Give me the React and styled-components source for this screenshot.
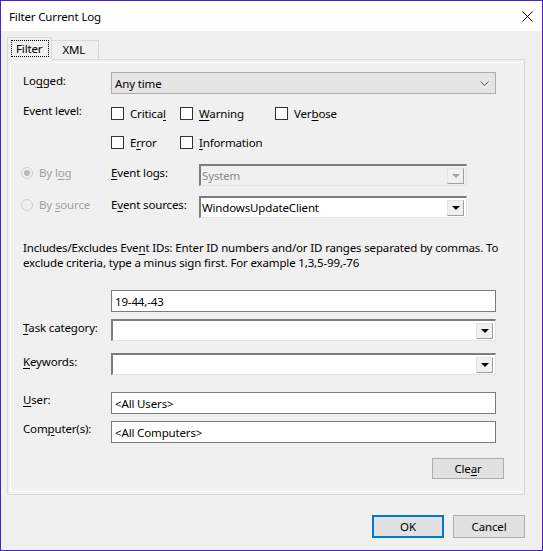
import React from "react";
import styled, { createGlobalStyle } from "styled-components";

const GlobalStyle = createGlobalStyle`
    html, body {
        margin: 0;
        padding: 0;
        background: #f0f0f0;
    }
    * {
        box-sizing: border-box;
    }
`;

const Window = styled.div`
    width: 543px;
    height: 551px;
    border: 1px solid #4b20c9;
    background: #f0f0f0;
    display: flex;
    flex-direction: column;
    font-family: "Noto Sans", "Open Sans", sans-serif;
    font-size: 11.5px;
    letter-spacing: -0.15px;
    color: #000;
    overflow: hidden;
`;

const TitleBar = styled.div`
    height: 30px;
    flex: 0 0 auto;
    background: #fff;
    display: flex;
    align-items: center;
    justify-content: space-between;
    padding: 0 9px 0 8px;
`;

const Body = styled.div`
    flex: 1;
    display: flex;
    flex-direction: column;
    padding: 7px 17px 0 6px;
`;

const TabStrip = styled.div`
    display: flex;
    align-items: flex-end;
    height: 22px;
    position: relative;
    z-index: 1;
    margin-bottom: -1px;
`;

const Tab = styled.div`
    height: ${(p) => (p.active ? "23px" : "20px")};
    padding: ${(p) => (p.active ? "2px 2px 3px 3px" : "0 13px 1px 10px")};
    border: 1px solid #d9d9d9;
    border-bottom: ${(p) => (p.active ? "none" : "1px solid #d9d9d9")};
    border-left: ${(p) => (p.active ? "1px solid #d9d9d9" : "none")};
    background: #f0f0f0;
    display: flex;
    align-items: center;
`;

const FocusRect = styled.span`
    border: 1px dotted #000;
    padding: 0 6px 0 4px;
    height: 17px;
    display: flex;
    align-items: center;
`;

const Panel = styled.div`
    border: 1px solid #d9d9d9;
    padding: 2px;
    background: #f0f0f0;
`;

const PanelInner = styled.div`
    border: 1px solid #fff;
    border-right-color: #f7f7f7;
    padding: 9px 16px 12px 0;
    display: flex;
    flex-direction: column;
`;

const Row = styled.div`
    display: flex;
    align-items: center;
    height: ${(p) => p.h || 22}px;
    margin-top: ${(p) => p.mt || 0}px;
    padding-left: ${(p) => (p.radio ? 10 : 12)}px;
`;

const Label = styled.div`
    width: 88px;
    flex: 0 0 auto;
    align-self: flex-start;
    line-height: ${(p) => p.lh || 18}px;
`;

const SubLabel = styled.div`
    width: 88px;
    flex: 0 0 auto;
    align-self: flex-start;
    line-height: 18px;
`;

const Select = styled.div`
    flex: 1;
    margin-right: 9px;
    height: 22px;
    background: #e5e5e5;
    border: 1px solid #adadad;
    display: flex;
    align-items: center;
    justify-content: space-between;
    padding: 0 6px 0 3px;
`;

const Combo = styled.div`
    flex: ${(p) => (p.full ? 1 : "0 0 auto")};
    width: ${(p) => (p.full ? "auto" : `${p.w}px`)};
    margin-right: ${(p) => (p.full ? 9 : 0)}px;
    height: 22px;
    border-style: solid;
    border-width: 2px 1px 1px 2px;
    border-color: #7c7c7c #e3e3e3 #e3e3e3 #7c7c7c;
    display: flex;
    align-items: center;
    justify-content: space-between;
    padding: 0 2px 0 0;
    color: ${(p) => (p.disabled ? "#8a8a8a" : "#000")};
    background: ${(p) => (p.disabled ? "#f0f0f0" : "#fff")};
`;

const ComboText = styled.span`
    padding-left: 1px;
    line-height: 16px;
`;

const ComboButton = styled.div`
    width: 17px;
    height: 16px;
    background: #f0f0f0;
    border: 1px solid #e3e3e3;
    border-right-color: #a0a0a0;
    border-bottom-color: #a0a0a0;
    display: flex;
    align-items: center;
    justify-content: center;
    padding-top: 1px;
`;

const Arrow = styled.div`
    width: 0;
    height: 0;
    border-left: 4px solid transparent;
    border-right: 4px solid transparent;
    border-top: 4px solid ${(p) => (p.disabled ? "#a0a0a0" : "#000")};
`;

const TextBox = styled.div`
    flex: 1;
    margin-right: 9px;
    height: 22px;
    background: #fff;
    border: 1px solid #7a7a7a;
    display: flex;
    align-items: center;
    padding-left: 3px;
`;

const CheckItem = styled.label`
    display: flex;
    align-items: center;
    width: ${(p) => p.w}px;
    flex: 0 0 auto;
`;

const Box = styled.span`
    width: 13px;
    height: 13px;
    border: 1px solid #333;
    background: #fff;
    margin-right: 6px;
    flex: 0 0 auto;
`;

const RadioItem = styled.div`
    display: flex;
    align-items: center;
    width: 90px;
    flex: 0 0 auto;
    align-self: flex-start;
    height: 17px;
    color: #a0a0a0;
`;

const RadioCircle = styled.span`
    width: 12px;
    height: 12px;
    border-radius: 50%;
    border: 1px solid #cccccc;
    background: #f0f0f0;
    margin-right: 6px;
    display: flex;
    align-items: center;
    justify-content: center;

    &::after {
        content: "";
        width: 6px;
        height: 6px;
        border-radius: 50%;
        background: ${(p) => (p.checked ? "#b9b9b9" : "transparent")};
    }
`;

const Hint = styled.div`
    margin-top: 22px;
    padding-left: 12px;
    line-height: 15px;
    white-space: nowrap;
`;

const ClearRow = styled.div`
    display: flex;
    justify-content: flex-end;
    margin-top: 15px;
`;

const Button = styled.button`
    width: 72px;
    height: ${(p) => p.h || 23}px;
    background: #e1e1e1;
    border: ${(p) => (p.primary ? "2px solid #0078d7" : "1px solid #adadad")};
    font-family: inherit;
    font-size: inherit;
    letter-spacing: inherit;
    color: #000;
    padding: 0;
    margin: 0;
    margin-right: ${(p) => p.mr || 0}px;
`;

const Footer = styled.div`
    display: flex;
    justify-content: flex-end;
    gap: 9px;
    margin-top: 20px;
`;

const CloseIcon = () => (
    <svg width="11" height="11" viewBox="0 0 11 11">
        <path d="M0.5 0.5 L10.5 10.5 M10.5 0.5 L0.5 10.5" stroke="#000" strokeWidth="1" fill="none" />
    </svg>
);

const Chevron = () => (
    <svg width="9" height="5" viewBox="0 0 9 5">
        <path d="M0.5 0.5 L4.5 4.5 L8.5 0.5" stroke="#555" strokeWidth="1" fill="none" />
    </svg>
);

const Key = styled.u`
    text-decoration-thickness: 1px;
    text-underline-offset: 2px;
`;

export default function App() {
    return (
        <>
            <GlobalStyle />
            <Window>
                <TitleBar>
                    <span>Filter Current Log</span>
                    <CloseIcon />
                </TitleBar>
                <Body>
                    <TabStrip>
                        <Tab active>
                            <FocusRect>Filter</FocusRect>
                        </Tab>
                        <Tab>XML</Tab>
                    </TabStrip>
                    <Panel>
                        <PanelInner>
                            <Row>
                                <Label>
                                    Lo<Key>g</Key>ged:
                                </Label>
                                <Select>
                                    <span>Any time</span>
                                    <Chevron />
                                </Select>
                            </Row>

                            <Row h={21} mt={9}>
                                <Label lh={15}>Event level:</Label>
                                <CheckItem w={69}>
                                    <Box />
                                    <span>
                                        Critica<Key>l</Key>
                                    </span>
                                </CheckItem>
                                <CheckItem w={95}>
                                    <Box />
                                    <span>
                                        <Key>W</Key>arning
                                    </span>
                                </CheckItem>
                                <CheckItem w={80}>
                                    <Box />
                                    <span>
                                        Ver<Key>b</Key>ose
                                    </span>
                                </CheckItem>
                            </Row>

                            <Row h={21} mt={8}>
                                <Label />
                                <CheckItem w={69}>
                                    <Box />
                                    <span>
                                        E<Key>r</Key>ror
                                    </span>
                                </CheckItem>
                                <CheckItem w={95}>
                                    <Box />
                                    <span>
                                        <Key>I</Key>nformation
                                    </span>
                                </CheckItem>
                            </Row>

                            <Row radio mt={11}>
                                <RadioItem>
                                    <RadioCircle checked />
                                    <span>
                                        By l<Key>o</Key>g
                                    </span>
                                </RadioItem>
                                <SubLabel>
                                    <Key>E</Key>vent logs:
                                </SubLabel>
                                <Combo w={268} disabled>
                                    <ComboText>System</ComboText>
                                    <ComboButton>
                                        <Arrow disabled />
                                    </ComboButton>
                                </Combo>
                            </Row>

                            <Row radio mt={10}>
                                <RadioItem>
                                    <RadioCircle />
                                    <span>
                                        By <Key>s</Key>ource
                                    </span>
                                </RadioItem>
                                <SubLabel>
                                    E<Key>v</Key>ent sources:
                                </SubLabel>
                                <Combo w={268}>
                                    <ComboText>WindowsUpdateClient</ComboText>
                                    <ComboButton>
                                        <Arrow />
                                    </ComboButton>
                                </Combo>
                            </Row>

                            <Hint>
                                Includes/Excludes Eve<Key>n</Key>t IDs: Enter ID numbers and/or ID ranges separated by commas. To
                                <br />
                                exclude criteria, type a minus sign first. For example 1,3,5-99,-76
                            </Hint>

                            <Row mt={20}>
                                <Label />
                                <TextBox>19-44,-43</TextBox>
                            </Row>

                            <Row mt={7}>
                                <Label>
                                    <Key>T</Key>ask category:
                                </Label>
                                <Combo full>
                                    <ComboText />
                                    <ComboButton>
                                        <Arrow />
                                    </ComboButton>
                                </Combo>
                            </Row>

                            <Row mt={12}>
                                <Label>
                                    <Key>K</Key>eywords:
                                </Label>
                                <Combo full>
                                    <ComboText />
                                    <ComboButton>
                                        <Arrow />
                                    </ComboButton>
                                </Combo>
                            </Row>

                            <Row mt={17}>
                                <Label lh={16}>
                                    <Key>U</Key>ser:
                                </Label>
                                <TextBox>&lt;All Users&gt;</TextBox>
                            </Row>

                            <Row mt={7}>
                                <Label lh={16}>
                                    Com<Key>p</Key>uter(s):
                                </Label>
                                <TextBox>&lt;All Computers&gt;</TextBox>
                            </Row>

                            <ClearRow>
                                <Button h={21} mr={1}>
                                    Cle<Key>a</Key>r
                                </Button>
                            </ClearRow>
                        </PanelInner>
                    </Panel>
                    <Footer>
                        <Button primary>OK</Button>
                        <Button>Cancel</Button>
                    </Footer>
                </Body>
            </Window>
        </>
    );
}
